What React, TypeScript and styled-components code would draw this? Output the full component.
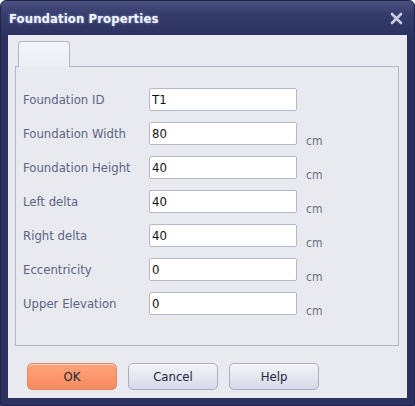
import React from "react";
import styled, { createGlobalStyle } from "styled-components";

const GlobalStyle = createGlobalStyle`
  html, body {
    margin: 0;
    padding: 0;
    background: #ffffff;
  }
  body {
    font-family: "DejaVu Sans Condensed", "DejaVu Sans", sans-serif;
  }
`;

const Window = styled.div`
  width: 415px;
  height: 406px;
  box-sizing: border-box;
  display: flex;
  flex-direction: column;
  background: linear-gradient(to bottom, #4a5282 0px, #343b69 14px, #2b3260 36px, #2b3260 100%);
  border: 1px solid #1f2448;
  border-radius: 6px 6px 0 0;
  overflow: hidden;
`;

const TitleBar = styled.div`
  height: 34px;
  display: flex;
  align-items: center;
  justify-content: space-between;
  padding: 0 11px 0 8px;
`;

const Title = styled.div`
  color: #f4f5fa;
  font-weight: bold;
  font-size: 13px;
  text-shadow: 0 0 3px rgba(150, 170, 230, 0.8);
  letter-spacing: 0.1px;
`;

const CloseIcon = styled.svg`
  width: 13px;
  height: 13px;
`;

const Content = styled.div`
  flex: 1;
  margin: 0 7px 7px 7px;
  background: #e8eaf0;
  padding: 6px 8px 0 7px;
  display: flex;
  flex-direction: column;
`;

const Tab = styled.div`
  width: 50px;
  height: 25px;
  margin-left: 3px;
  margin-bottom: -1px;
  border: 1px solid #b3b7cd;
  border-bottom: none;
  border-radius: 4px 4px 0 0;
  background: linear-gradient(to bottom, #f4f5f9, #eceef4);
  position: relative;
  z-index: 1;
`;

const Panel = styled.div`
  height: 280px;
  box-sizing: border-box;
  border: 1px solid #b3b7cd;
  padding: 21px 7px 0 7px;
  display: grid;
  grid-template-columns: 126px 148px auto;
  grid-auto-rows: 23px;
  row-gap: 11px;
  align-content: start;
`;

const Label = styled.div`
  font-size: 13px;
  color: #5c6484;
  display: flex;
  align-items: center;
  white-space: nowrap;
`;

const Input = styled.input`
  box-sizing: border-box;
  height: 23px;
  width: 148px;
  border: 1px solid #b5b9cf;
  border-radius: 2px;
  background: #ffffff;
  padding: 0 2px;
  font-family: "DejaVu Sans Condensed", "DejaVu Sans", sans-serif;
  font-size: 13px;
  color: #111111;
  outline: none;
`;

const Unit = styled.div`
  font-size: 12px;
  color: #6a6f82;
  display: flex;
  align-items: flex-end;
  padding-left: 9px;
  margin-bottom: -3px;
`;

const ButtonRow = styled.div`
  display: flex;
  gap: 11px;
  padding: 17px 0 0 12px;
`;

const Button = styled.button<{ $primary?: boolean }>`
  width: 90px;
  height: 27px;
  border-radius: 5px;
  font-family: "DejaVu Sans Condensed", "DejaVu Sans", sans-serif;
  font-size: 13px;
  color: #22263a;
  border: 1px solid ${(p) => (p.$primary ? "#d98a6c" : "#a9adc6")};
  background: ${(p) =>
    p.$primary
      ? "linear-gradient(to bottom, #ffa47c, #f88a5e)"
      : "linear-gradient(to bottom, #f3f4f9, #d6d9e8)"};
  box-shadow: inset 0 1px 0 rgba(255, 255, 255, 0.5);
`;

const fields = [
  { label: "Foundation ID", value: "T1", unit: "" },
  { label: "Foundation Width", value: "80", unit: "cm" },
  { label: "Foundation Height", value: "40", unit: "cm" },
  { label: "Left delta", value: "40", unit: "cm" },
  { label: "Right delta", value: "40", unit: "cm" },
  { label: "Eccentricity", value: "0", unit: "cm" },
  { label: "Upper Elevation", value: "0", unit: "cm" },
];

export default function App() {
  return (
    <>
      <GlobalStyle />
      <Window>
        <TitleBar>
          <Title>Foundation Properties</Title>
          <CloseIcon viewBox="0 0 13 13">
            <path
              d="M2 2 L11 11 M11 2 L2 11"
              stroke="#c9cce0"
              strokeWidth="2.6"
              strokeLinecap="round"
            />
          </CloseIcon>
        </TitleBar>
        <Content>
          <Tab />
          <Panel>
            {fields.map((f) => (
              <React.Fragment key={f.label}>
                <Label>{f.label}</Label>
                <Input defaultValue={f.value} />
                <Unit>{f.unit}</Unit>
              </React.Fragment>
            ))}
          </Panel>
          <ButtonRow>
            <Button $primary>OK</Button>
            <Button>Cancel</Button>
            <Button>Help</Button>
          </ButtonRow>
        </Content>
      </Window>
    </>
  );
}
